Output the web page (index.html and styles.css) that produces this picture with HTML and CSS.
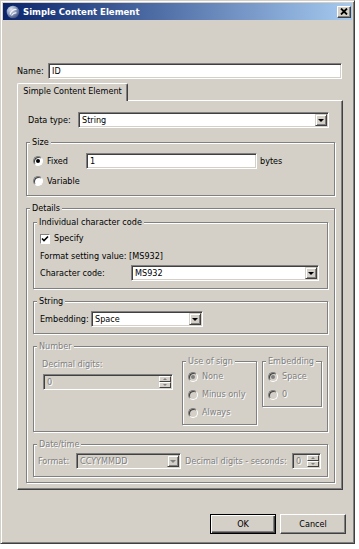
FILE: index.html
```html
<!DOCTYPE html>
<html lang="en">
<head>
	<meta charset="UTF-8" />
	<title>Simple Content Element</title>
	<link rel="stylesheet" href="styles.css">
</head>
<body>
	<div class="window">
		<div class="titlebar">
			<svg class="appIcon" width="14" height="14" viewBox="0 0 14 14">
				<defs>
					<radialGradient id="ball" cx="0.35" cy="0.3" r="0.75">
						<stop offset="0" stop-color="#dfe6f2"/>
						<stop offset="0.55" stop-color="#8797bb"/>
						<stop offset="1" stop-color="#3d4d78"/>
					</radialGradient>
				</defs>
				<circle cx="7" cy="7" r="6.3" fill="url(#ball)"/>
				<path d="M4 9.5 C5 6 8 4 10.5 4.5 M5.5 10.5 C7 8.5 9 7.5 10.5 8" stroke="#f4f6fb" stroke-width="1.2" fill="none"/>
			</svg>
			<span class="title">Simple Content Element</span>
			<span class="closeBtn">
				<svg width="8" height="7" viewBox="0 0 8 7"><path d="M1 0.5 L7 6.5 M7 0.5 L1 6.5" stroke="#000" stroke-width="1.8"/></svg>
			</span>
		</div>

		<div class="client">
			<div class="nameRow">
				<span class="nameLabel">Name:</span>
				<div class="field grow">ID</div>
			</div>

			<div class="tabs">
				<div class="tab">Simple Content Element</div>
			</div>

			<div class="panel">
				<div class="row dataType">
					<span class="lbl wDataType">Data type:</span>
					<div class="combo grow"><span class="comboText">String</span><span class="comboBtn"></span></div>
				</div>

				<fieldset class="group sizeGroup">
					<legend>Size</legend>
					<div class="body sizeBody">
						<div class="row">
							<span class="radio on"></span>
							<span class="optLabel wFixed">Fixed</span>
							<div class="field wBytes">1</div>
							<span class="unit">bytes</span>
						</div>
						<div class="row second">
							<span class="radio"></span>
							<span class="optLabel">Variable</span>
						</div>
					</div>
				</fieldset>

				<fieldset class="group details">
					<legend>Details</legend>
					<div class="body detailsBody">
						<fieldset class="group">
							<legend>Individual character code</legend>
							<div class="body charBody">
								<div class="textRow">
									<span class="check"><svg width="8" height="8" viewBox="0 0 8 8"><path d="M1 3.5 L3 5.5 L7 1.5" stroke="#000" stroke-width="1.6" fill="none"/></svg></span>
									<span class="optLabel">Specify</span>
								</div>
								<div class="textRow formatRow">Format setting value: [MS932]</div>
								<div class="row charRow">
									<span class="lbl wCharCode">Character code:</span>
									<div class="combo grow"><span class="comboText">MS932</span><span class="comboBtn"></span></div>
								</div>
							</div>
						</fieldset>

						<fieldset class="group">
							<legend>String</legend>
							<div class="body stringBody">
								<div class="row">
									<span class="lbl wEmbedding">Embedding:</span>
									<div class="combo wSpace"><span class="comboText">Space</span><span class="comboBtn"></span></div>
								</div>
							</div>
						</fieldset>

						<fieldset class="group off">
							<legend>Number</legend>
							<div class="body numberBody">
								<div class="decimalCol">
									<div class="textRow decLabel">Decimal digits:</div>
									<div class="spin decSpin"><span class="spinText">0</span><span class="spinBtns"><span class="spinUp"></span><span class="spinDown"></span></span></div>
								</div>
								<fieldset class="group signGroup">
									<legend>Use of sign</legend>
									<div class="body optBody">
										<div class="textRow"><span class="radio on"></span><span class="optLabel">None</span></div>
										<div class="textRow"><span class="radio"></span><span class="optLabel">Minus only</span></div>
										<div class="textRow"><span class="radio"></span><span class="optLabel">Always</span></div>
									</div>
								</fieldset>
								<fieldset class="group embedGroup">
									<legend>Embedding</legend>
									<div class="body optBody">
										<div class="textRow"><span class="radio on"></span><span class="optLabel">Space</span></div>
										<div class="textRow"><span class="radio"></span><span class="optLabel">0</span></div>
									</div>
								</fieldset>
							</div>
						</fieldset>

						<fieldset class="group off">
							<legend>Date/time</legend>
							<div class="body dateBody">
								<div class="row">
									<span class="lbl wFormat">Format:</span>
									<div class="combo wDate"><span class="comboText">CCYYMMDD</span><span class="comboBtn"></span></div>
									<span class="secLabel">Decimal digits - seconds:</span>
									<div class="spin secSpin"><span class="spinText">0</span><span class="spinBtns"><span class="spinUp"></span><span class="spinDown"></span></span></div>
								</div>
							</div>
						</fieldset>
					</div>
				</fieldset>
			</div>

			<div class="buttons">
				<div class="button default">OK</div>
				<div class="button">Cancel</div>
			</div>
		</div>
	</div>
</body>
</html>
```

FILE: styles.css
```css
body {
	margin: 0;
	background: #fff;
	font-family: "DejaVu Sans Condensed", "Liberation Sans", sans-serif;
	font-size: 9px;
	color: #000;
}

.window {
	width: 355px;
	height: 544px;
	box-sizing: border-box;
	padding: 2px;
	background: #d4d0c8;
	border: 1px solid;
	border-color: #d4d0c8 #404040 #404040 #d4d0c8;
	box-shadow: inset 1px 1px 0 #fff, inset -1px -1px 0 #808080;
}

/* title bar */

.titlebar {
	height: 17px;
	display: flex;
	align-items: center;
	padding-left: 3px;
	background: linear-gradient(to right, #0a246a, #a6caf0);
}
.appIcon {
	flex: none;
}
.title {
	margin-left: 3px;
	color: #fff;
	font-weight: bold;
	font-size: 9.5px;
}
.closeBtn {
	margin-left: auto;
	margin-right: 1px;
	width: 14px;
	height: 12px;
	box-sizing: border-box;
	display: flex;
	align-items: center;
	justify-content: center;
	background: #d4d0c8;
	border: 1px solid;
	border-color: #fff #404040 #404040 #fff;
	box-shadow: inset -1px -1px 0 #808080;
}

/* client area */

.client {
	padding: 43px 6px 0 14px;
}
.nameRow {
	display: flex;
	align-items: center;
	height: 16px;
	margin-right: 4px;
}
.nameLabel {
	width: 31px;
}
.grow {
	flex: 1;
}

.field, .combo, .spin {
	height: 16px;
	box-sizing: border-box;
	border: 1px solid;
	border-color: #808080 #fff #fff #808080;
	box-shadow: inset 1px 1px 0 #404040, inset -1px -1px 0 #d4d0c8;
	background: #fff;
	padding: 1px 1px 1px 3px;
	line-height: 12px;
	display: flex;
	flex: none;
}
.field.grow, .combo.grow {
	flex: 1;
}
.comboText, .spinText {
	flex: 1;
	white-space: nowrap;
}
.comboBtn {
	width: 12px;
	height: 12px;
	box-sizing: border-box;
	flex: none;
	background: #d4d0c8;
	border: 1px solid;
	border-color: #d4d0c8 #404040 #404040 #d4d0c8;
	box-shadow: inset 1px 1px 0 #fff, inset -1px -1px 0 #808080;
	display: flex;
	align-items: center;
	justify-content: center;
}
.comboBtn:after {
	content: "";
	border-left: 3px solid transparent;
	border-right: 3px solid transparent;
	border-top: 3px solid #000;
	margin-top: 1px;
}

.spinBtns {
	width: 12px;
	display: flex;
	flex-direction: column;
	flex: none;
}
.spinUp, .spinDown {
	height: 6px;
	box-sizing: border-box;
	background: #d4d0c8;
	border: 1px solid;
	border-color: #fff #404040 #404040 #fff;
	display: flex;
	align-items: center;
	justify-content: center;
}
.spinUp:after, .spinDown:after {
	content: "";
	border-left: 2px solid transparent;
	border-right: 2px solid transparent;
}
.spinUp:after {
	border-bottom: 2px solid #808080;
}
.spinDown:after {
	border-top: 2px solid #808080;
}

/* tab */

.tabs {
	margin-top: 4px;
	display: flex;
}
.tab {
	position: relative;
	width: 111px;
	height: 18px;
	margin-bottom: -1px;
	box-sizing: border-box;
	border: 1px solid;
	border-bottom: none;
	border-color: #fff #404040 #fff #fff;
	border-radius: 2px 2px 0 0;
	box-shadow: inset -1px 0 0 #808080;
	background: #d4d0c8;
	text-align: center;
	line-height: 15px;
}
.panel {
	margin-right: 3px;
	padding: 11px 7px 6px 8px;
	border: 1px solid;
	border-color: #fff #404040 #404040 #fff;
	box-shadow: inset -1px -1px 0 #808080;
}

.row {
	display: flex;
	align-items: center;
	height: 16px;
}
.row.second {
	margin-top: 4px;
}
.textRow {
	display: flex;
	align-items: center;
	height: 13px;
	line-height: 13px;
	white-space: nowrap;
}
.lbl {
	flex: none;
	white-space: nowrap;
}
.dataType {
	padding: 0 6px 0 2px;
}
.wDataType { width: 50px; }
.wCharCode { width: 91px; }
.wEmbedding { width: 51px; }
.wFormat { width: 38px; }
.wFixed { width: 39px; }
.wBytes { width: 171px; }
.wSpace { width: 112px; }
.wDate { width: 105px; }

/* group boxes */

.group {
	margin: 0;
	padding: 0;
	min-width: 0;
	border: 1px solid #808080;
	box-shadow: inset 1px 1px 0 #fff, 1px 1px 0 #fff;
}
.group legend {
	margin-left: 3px;
	padding: 0 2px;
	line-height: 13px;
	background: #d4d0c8;
}
.group + .group {
	margin-top: 6px;
}
.sizeGroup {
	margin-top: 8px;
}
.details {
	margin-top: 5px;
}

.sizeBody {
	padding: 4px 0 6px 6px;
}
.detailsBody {
	padding: 1px 6px 5px 6px;
}
.charBody {
	padding: 3px 8px 7px 6px;
}
.formatRow {
	margin-top: 5px;
}
.charRow {
	margin-top: 2px;
}
.stringBody {
	padding: 3px 0 6px 6px;
}
.numberBody {
	display: flex;
	align-items: flex-start;
	padding: 2px 9px 6px 9px;
}
.decimalCol {
	width: 130px;
	margin-right: 9px;
	flex: none;
}
.decLabel {
	margin-top: 3px;
	margin-left: -1px;
}
.decSpin {
	margin-top: 3px;
}
.signGroup {
	width: 73px;
	flex: none;
}
.numberBody .embedGroup {
	width: 58px;
	flex: none;
	margin: 0 0 0 5px;
}
.optBody {
	padding: 2px 0 5px 5px;
}
.optBody .textRow + .textRow {
	margin-top: 5px;
}
.dateBody {
	padding: 2px 6px 7px 4px;
}
.secLabel {
	margin-left: 4px;
	white-space: nowrap;
}
.secSpin {
	width: 29px;
	margin-left: auto;
}

.radio {
	width: 10px;
	height: 10px;
	box-sizing: border-box;
	flex: none;
	border-radius: 50%;
	border: 1px solid;
	border-color: #808080 #fff #fff #808080;
	box-shadow: inset 1px 1px 0 #404040;
	background: #fff;
	display: flex;
	align-items: center;
	justify-content: center;
}
.radio.on:after {
	content: "";
	width: 4px;
	height: 4px;
	border-radius: 50%;
	background: #000;
}
.check {
	width: 10px;
	height: 10px;
	box-sizing: border-box;
	flex: none;
	border: 1px solid;
	border-color: #808080 #fff #fff #808080;
	background: #fff;
	display: flex;
}
.optLabel {
	margin-left: 4px;
	white-space: nowrap;
}
.unit {
	margin-left: 3px;
}

/* disabled */

.off, .off legend {
	color: #808080;
	text-shadow: 1px 1px 0 #fff;
}
.off .field, .off .combo, .off .spin {
	background: #d4d0c8;
}
.off .radio {
	background: #d4d0c8;
}
.off .radio.on:after {
	background: #808080;
}
.off .comboBtn:after {
	border-top-color: #808080;
}

/* buttons */

.buttons {
	display: flex;
	justify-content: flex-end;
	margin-top: 24px;
}
.button {
	width: 66px;
	height: 20px;
	box-sizing: border-box;
	margin-left: 4px;
	text-align: center;
	line-height: 18px;
	border: 1px solid;
	border-color: #fff #404040 #404040 #fff;
	box-shadow: inset -1px -1px 0 #808080;
}
.button.default {
	border-color: #000;
	box-shadow: inset 1px 1px 0 #fff, inset -1px -1px 0 #404040, inset -2px -2px 0 #808080;
}
```
